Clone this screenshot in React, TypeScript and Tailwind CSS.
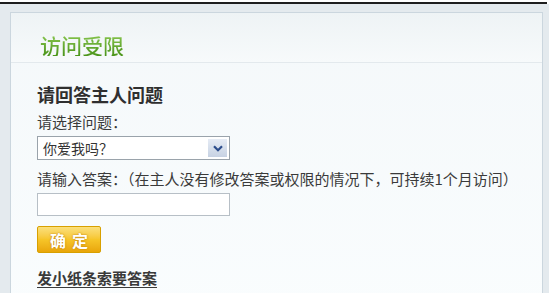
import React from 'react';

const font = { fontFamily: '"Noto Sans CJK SC", "Noto Sans", sans-serif' };

const App: React.FC = () => {
  return (
    <div className="w-[549px] h-[293px] overflow-hidden bg-white" style={font}>
      {/* top rule */}
      <div className="h-[2px] bg-white" />
      <div className="h-[2px] w-[547px] bg-[#1e1e1e]" />

      {/* outer frame */}
      <div className="h-[289px] bg-[#e4eaee] pl-[10px] pr-[6px] pt-[8px] flex">
        <div className="flex-1 h-[320px] border border-[#cbd6de] bg-gradient-to-b from-[#f4f8fa] to-[#fafdfe] flex flex-col">
          {/* header */}
          <div className="h-[50px] border-b border-[#e3e9ed] bg-gradient-to-b from-[#eef3f5] to-[#f7fafb] flex items-start pl-[29px] pt-[22px]">
            <span className="text-[21px] font-medium leading-none bg-gradient-to-b from-[#86c44c] to-[#4a9418] bg-clip-text text-transparent">
              访问受限
            </span>
          </div>

          {/* body */}
          <div className="flex flex-col pl-[26px] pt-[19px] text-[#333]">
            <h2 className="text-[18px] font-bold leading-[24px] text-[#2f2f2f]">请回答主人问题</h2>
            <label className="mt-[6px] text-[15px] leading-[20px] text-[#3a3a3a]">请选择问题：</label>

            <div className="mt-[4px] w-[193px] h-[24px] border border-[#9aa3ab] bg-white flex items-center">
              <span className="flex-1 pl-[5px] text-[14px] leading-none text-[#333]">你爱我吗？</span>
              <span className="mr-[2px] w-[19px] h-[18px] bg-gradient-to-b from-[#e6ecf5] to-[#c7d2e3] flex items-center justify-center">
                <svg width="10" height="7" viewBox="0 0 10 7">
                  <path d="M1 1.2 L5 5.2 L9 1.2" fill="none" stroke="#2c4d8c" strokeWidth="2.2" />
                </svg>
              </span>
            </div>

            <label className="mt-[9px] text-[15px] leading-[20px] text-[#3a3a3a] whitespace-nowrap">
              请输入答案：（在主人没有修改答案或权限的情况下，可持续1个月访问）
            </label>

            <input
              className="mt-[4px] w-[193px] h-[23px] border border-[#b7bfc6] bg-white outline-none"
              type="text"
            />

            <button className="mt-[10px] w-[64px] h-[27px] rounded-[2px] border border-[#d8a000] bg-gradient-to-b from-[#fbe07a] via-[#f6c528] to-[#e9a608] text-white text-[16px] font-bold tracking-[6px] pl-[6px] [text-shadow:0_0_2px_#b87400]">
              确定
            </button>

            <a className="mt-[15px] text-[15px] font-bold leading-[20px] text-[#3a3a3a] underline underline-offset-[3px]">
              发小纸条索要答案
            </a>
          </div>
        </div>
      </div>
    </div>
  );
};

export default App;
